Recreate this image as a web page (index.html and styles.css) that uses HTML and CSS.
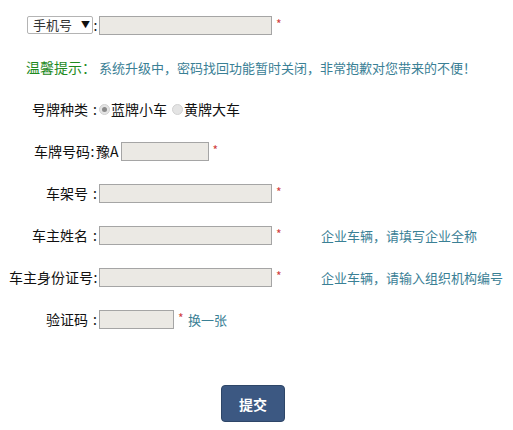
FILE: index.html
```html
<!DOCTYPE html>
<html lang="zh-CN">
<head>
<meta charset="utf-8">
<title>找回密码</title>
<link rel="stylesheet" href="styles.css">
</head>
<body>
<form class="form">
  <div class="row">
    <div class="label"><span class="select">手机号<span class="arrow">▼</span></span><span class="colon tight">:</span></div>
    <div class="field"><span class="input"></span><span class="star">*</span></div>
  </div>
  <div class="row">
    <div class="label tip">温馨提示：</div>
    <div class="field"><span class="note">系统升级中，密码找回功能暂时关闭，非常抱歉对您带来的不便！</span></div>
  </div>
  <div class="row">
    <div class="label">号牌种类<span class="colon wide">:</span></div>
    <div class="field">
      <span class="radio checked"></span><span class="rtext">蓝牌小车</span>
      <span class="radio"></span><span class="rtext">黄牌大车</span>
    </div>
  </div>
  <div class="row">
    <div class="label plate">车牌号码<span class="colon tight">:</span></div>
    <div class="field"><span class="prefix">豫A</span><span class="input short"></span><span class="star">*</span></div>
  </div>
  <div class="row">
    <div class="label">车架号<span class="colon wide">:</span></div>
    <div class="field"><span class="input"></span><span class="star">*</span></div>
  </div>
  <div class="row">
    <div class="label">车主姓名<span class="colon wide">:</span></div>
    <div class="field"><span class="input"></span><span class="star">*</span><span class="hint">企业车辆，请填写企业全称</span></div>
  </div>
  <div class="row">
    <div class="label">车主身份证号<span class="colon tight">:</span></div>
    <div class="field"><span class="input"></span><span class="star">*</span><span class="hint">企业车辆，请输入组织机构编号</span></div>
  </div>
  <div class="row">
    <div class="label">验证码<span class="colon wide">:</span></div>
    <div class="field"><span class="input code"></span><span class="star">*</span><a class="link" href="#">换一张</a></div>
  </div>
  <div class="actions">
    <button type="button" class="submit">提交</button>
  </div>
</form>
</body>
</html>
```
FILE: styles.css
```css
html, body {
  margin: 0;
  padding: 0;
  background: #ffffff;
}
body {
  font-family: "Noto Sans CJK SC", "Liberation Sans", sans-serif;
  font-size: 14px;
  color: #111;
}
.form {
  padding: 4px 0 0 8px;
}
.row {
  display: flex;
  align-items: center;
  height: 42px;
}
.label {
  width: 90px;
  flex: none;
  white-space: nowrap;
  display: flex;
  justify-content: flex-end;
  align-items: center;
  line-height: 18px;
}
.label.plate {
  width: 87px;
}
.field {
  display: flex;
  align-items: center;
  padding-left: 1px;
  white-space: nowrap;
}
.colon {
  display: inline-block;
  text-align: right;
}
.colon.wide {
  width: 9px;
  padding-right: 1px;
}
.colon.tight {
  width: 5px;
  text-align: center;
}
.select {
  display: inline-flex;
  align-items: center;
  box-sizing: border-box;
  width: 66px;
  height: 18px;
  border: 1px solid #b4b4b4;
  border-radius: 2px;
  background: #fff;
  font-size: 13px;
  color: #333;
  padding-left: 5px;
  line-height: 16px;
}
.arrow {
  font-size: 9px;
  margin-left: 9px;
  color: #111;
}
.input {
  display: inline-block;
  box-sizing: border-box;
  width: 173px;
  height: 19px;
  background: #ebe9e4;
  border: 1px solid #a5a5a5;
}
.input.short {
  width: 88px;
}
.input.code {
  width: 75px;
}
.star {
  color: #d04040;
  font-size: 12px;
  line-height: 12px;
  margin-left: 4px;
  width: 7px;
  padding-bottom: 2px;
}
.hint {
  color: #3a8095;
  font-size: 13px;
  margin-left: 38px;
}
.note {
  color: #3a8095;
  font-size: 13px;
}
.tip {
  color: #1e8a1e;
  font-size: 14px;
  padding-right: 2px;
  width: 88px;
}
.prefix {
  margin-left: 0;
  margin-right: 2px;
}
.radio {
  display: inline-block;
  box-sizing: border-box;
  width: 11px;
  height: 11px;
  border-radius: 50%;
  background: #e4e4e4;
  border: 1px solid #d2d2d2;
  position: relative;
}
.radio.checked::after {
  content: "";
  position: absolute;
  left: 2px;
  top: 2px;
  width: 5px;
  height: 5px;
  border-radius: 50%;
  background: #8a8a8a;
}
.rtext {
  margin-left: 1px;
  margin-right: 5px;
}
.link {
  color: #3a8095;
  font-size: 13px;
  text-decoration: none;
  margin-left: 3px;
}
.actions {
  padding-top: 45px;
  padding-left: 213px;
}
.submit {
  width: 64px;
  height: 37px;
  border: 1px solid #2e4668;
  border-radius: 4px;
  background: #3c5882;
  color: #fff;
  font-family: "Noto Sans CJK SC", sans-serif;
  font-size: 14px;
  font-weight: bold;
  padding: 0;
  cursor: pointer;
}
```
